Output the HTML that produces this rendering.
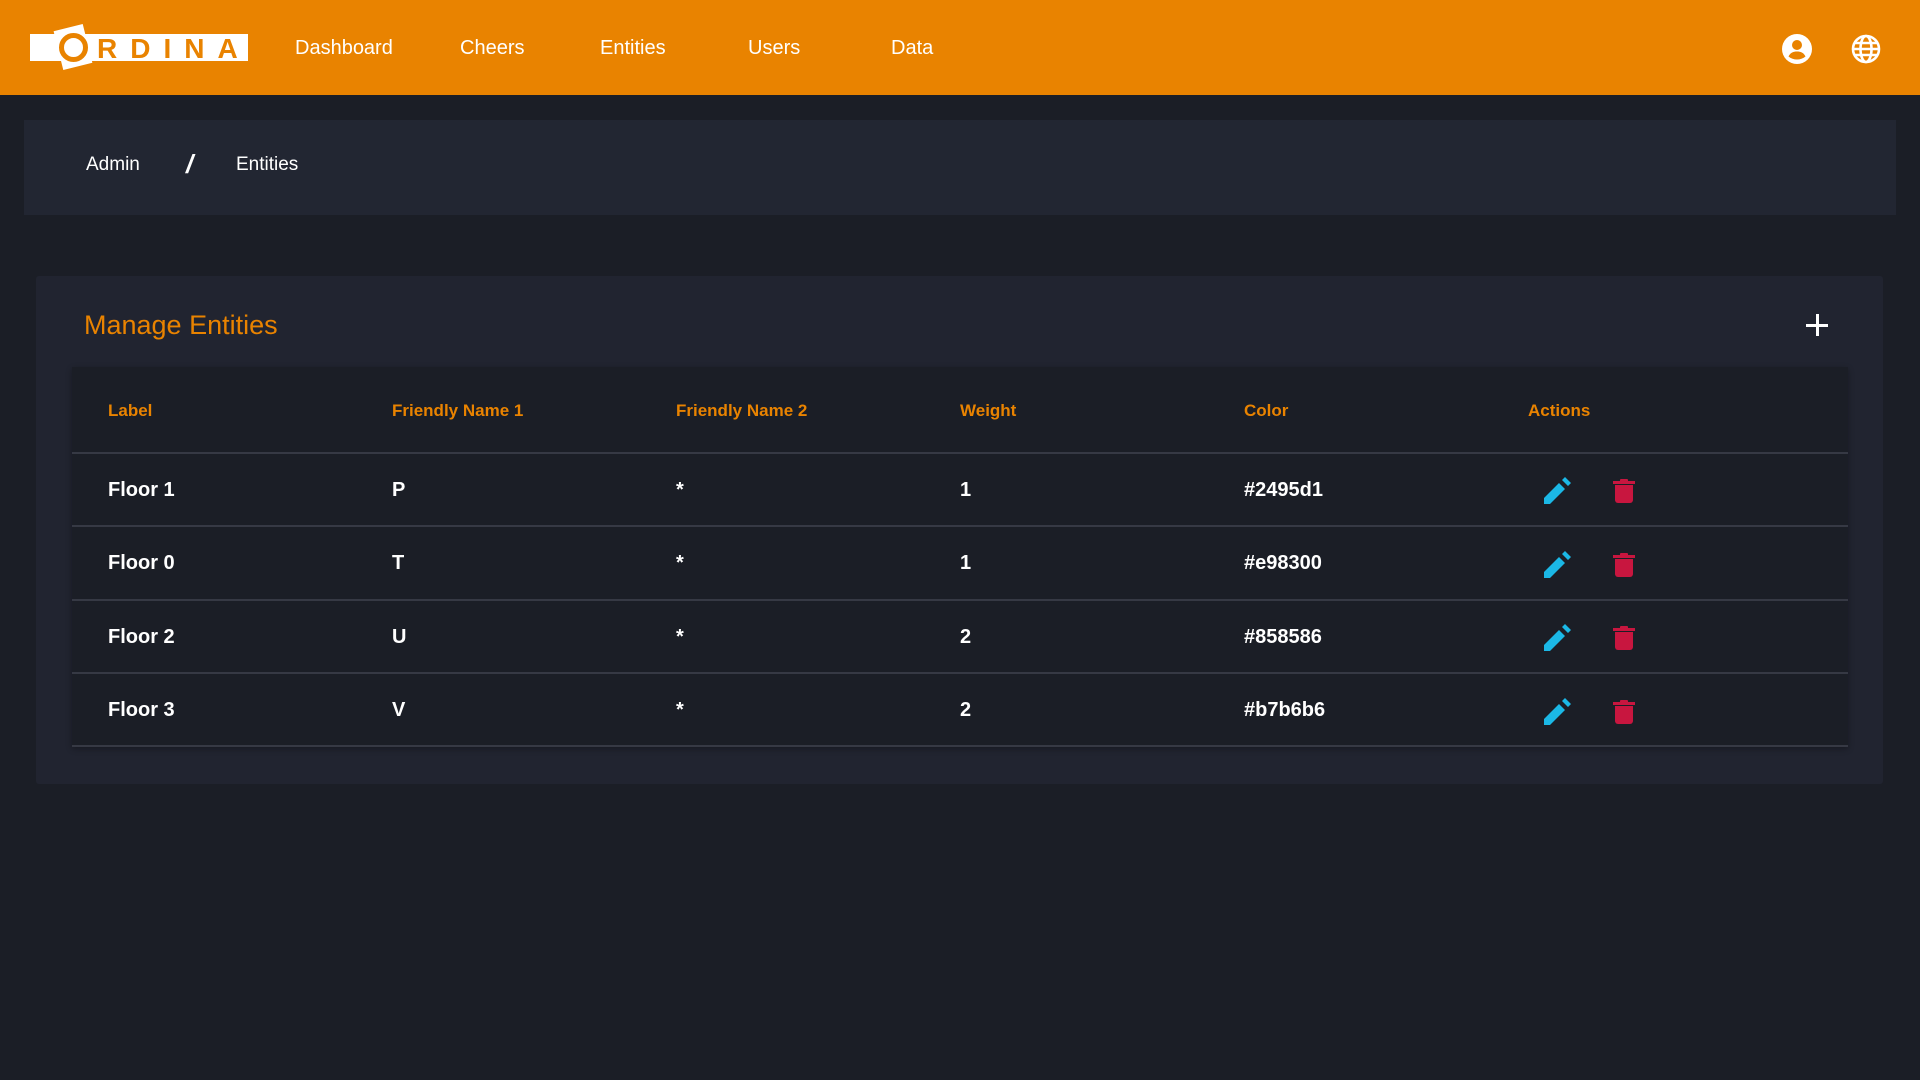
<!DOCTYPE html>
<html><head><meta charset="utf-8"><style>
*{margin:0;padding:0;box-sizing:border-box}
body{width:1920px;height:1080px;background:#1b1e26;font-family:"Liberation Sans",sans-serif;color:#fff;position:relative;overflow:hidden}
div{white-space:nowrap}
.hdr{position:absolute;left:0;top:0;width:1920px;height:95px;background:#e98300}
.logo{position:absolute;left:30px;top:34px;width:218px;height:27px;background:#fff}
.logo .ring{position:absolute;left:28px;top:-7px;width:30px;height:40px;background:#fff;transform:rotate(-14deg)}
.logo .o{position:absolute;left:29px;top:-1px;width:29px;height:29px;border:5px solid #e98300;border-radius:50%}
.logo .t{position:absolute;left:67px;top:-1px;font-size:28px;letter-spacing:13px;color:#e98300;font-weight:bold}
.nav{position:absolute;top:37px;font-size:20px;color:#fff}
.bc{position:absolute;left:24px;top:120px;width:1872px;height:95px;background:#222632}
.bc span{position:absolute;top:34px;font-size:19px}
.card{position:absolute;left:36px;top:276px;width:1847px;height:508px;background:#212430;border-radius:3px}
.title{position:absolute;left:84px;top:310px;font-size:27px;color:#e98300}
.plus{position:absolute;left:1806px;top:314px;width:22px;height:22px}
.plus:before{content:"";position:absolute;left:10px;top:0;width:3px;height:22px;background:#fff}
.plus:after{content:"";position:absolute;left:0;top:10px;width:22px;height:3px;background:#fff}
.tbl{position:absolute;left:72px;top:367px;width:1776px;height:380px;background:#1b1e26;box-shadow:0 2px 6px rgba(0,0,0,.3)}
.th{position:absolute;top:34px;font-size:17px;font-weight:bold;color:#e98300}
.line{position:absolute;left:0;width:1776px;height:2px;background:#363944}
.td{position:absolute;font-size:20px;font-weight:bold}
</style></head><body>
<div class="hdr">
 <div class="logo"><div class="ring"></div><div class="o"></div><div class="t">RDINA</div></div>
 <div class="nav" style="left:295px">Dashboard</div>
 <div class="nav" style="left:460px">Cheers</div>
 <div class="nav" style="left:600px">Entities</div>
 <div class="nav" style="left:748px">Users</div>
 <div class="nav" style="left:891px">Data</div>
 <svg style="position:absolute;left:1782px;top:34px" width="30" height="30" viewBox="0 0 30 30"><circle cx="15" cy="15" r="15" fill="#fff"/><circle cx="15" cy="11" r="5" fill="#e98300"/><path d="M6.5 22.5c2-4 5-5 8.5-5s6.5 1 8.5 5c-2.5 2-5.5 3-8.5 3s-6-1-8.5-3z" fill="#e98300"/></svg>
 <svg style="position:absolute;left:1851px;top:34px" width="30" height="30" viewBox="0 0 30 30" fill="none" stroke="#fff" stroke-width="2.6"><circle cx="15" cy="15" r="13"/><ellipse cx="15" cy="15" rx="5.5" ry="13"/><path d="M2 15h26M4 9h22M4 21h22"/></svg>
</div>
<div class="bc"><span style="left:62px">Admin</span><span style="left:162px;font-size:26px;top:29px;font-weight:bold;font-style:italic">/</span><span style="left:212px">Entities</span></div>
<div class="card"></div>
<div class="title">Manage Entities</div>
<div class="plus"></div>
<div class="tbl">
 <div class="th" style="left:36px">Label</div>
 <div class="th" style="left:320px">Friendly Name 1</div>
 <div class="th" style="left:604px">Friendly Name 2</div>
 <div class="th" style="left:888px">Weight</div>
 <div class="th" style="left:1172px">Color</div>
 <div class="th" style="left:1456px">Actions</div>
 <div class="line" style="top:85px"></div>
 <div class="line" style="top:158px"></div>
 <div class="line" style="top:232px"></div>
 <div class="line" style="top:305px"></div>
 <div class="line" style="top:378px"></div>
</div>
<div style="position:absolute;left:0;top:0">
<div class="td" style="left:108px;top:479px">Floor 1</div><div class="td" style="left:392px;top:479px">P</div><div class="td" style="left:676px;top:479px">*</div><div class="td" style="left:960px;top:479px">1</div><div class="td" style="left:1244px;top:479px">#2495d1</div>
<div class="td" style="left:108px;top:552px">Floor 0</div><div class="td" style="left:392px;top:552px">T</div><div class="td" style="left:676px;top:552px">*</div><div class="td" style="left:960px;top:552px">1</div><div class="td" style="left:1244px;top:552px">#e98300</div>
<div class="td" style="left:108px;top:626px">Floor 2</div><div class="td" style="left:392px;top:626px">U</div><div class="td" style="left:676px;top:626px">*</div><div class="td" style="left:960px;top:626px">2</div><div class="td" style="left:1244px;top:626px">#858586</div>
<div class="td" style="left:108px;top:699px">Floor 3</div><div class="td" style="left:392px;top:699px">V</div><div class="td" style="left:676px;top:699px">*</div><div class="td" style="left:960px;top:699px">2</div><div class="td" style="left:1244px;top:699px">#b7b6b6</div>
</div>
<svg width="1920" height="1080" style="position:absolute;left:0;top:0">
<defs>
<g id="pen"><path d="M-13 13v-6l15-15 6 6-15 15z M5 -11l3-3 6 6-3 3z" fill="#1bb8e6"/></g>
<g id="trash" fill="#c8163f"><rect x="-11" y="-10" width="22" height="3"/><rect x="-4" y="-12" width="8" height="3" rx="1"/><path d="M-9 -6h18v15a3 3 0 0 1-3 3h-12a3 3 0 0 1-3-3z"/></g>
</defs>
<use href="#pen" x="1557" y="491"/><use href="#trash" x="1624" y="491"/>
<use href="#pen" x="1557" y="565"/><use href="#trash" x="1624" y="565"/>
<use href="#pen" x="1557" y="638"/><use href="#trash" x="1624" y="638"/>
<use href="#pen" x="1557" y="712"/><use href="#trash" x="1624" y="712"/>
</svg>
</body></html>
